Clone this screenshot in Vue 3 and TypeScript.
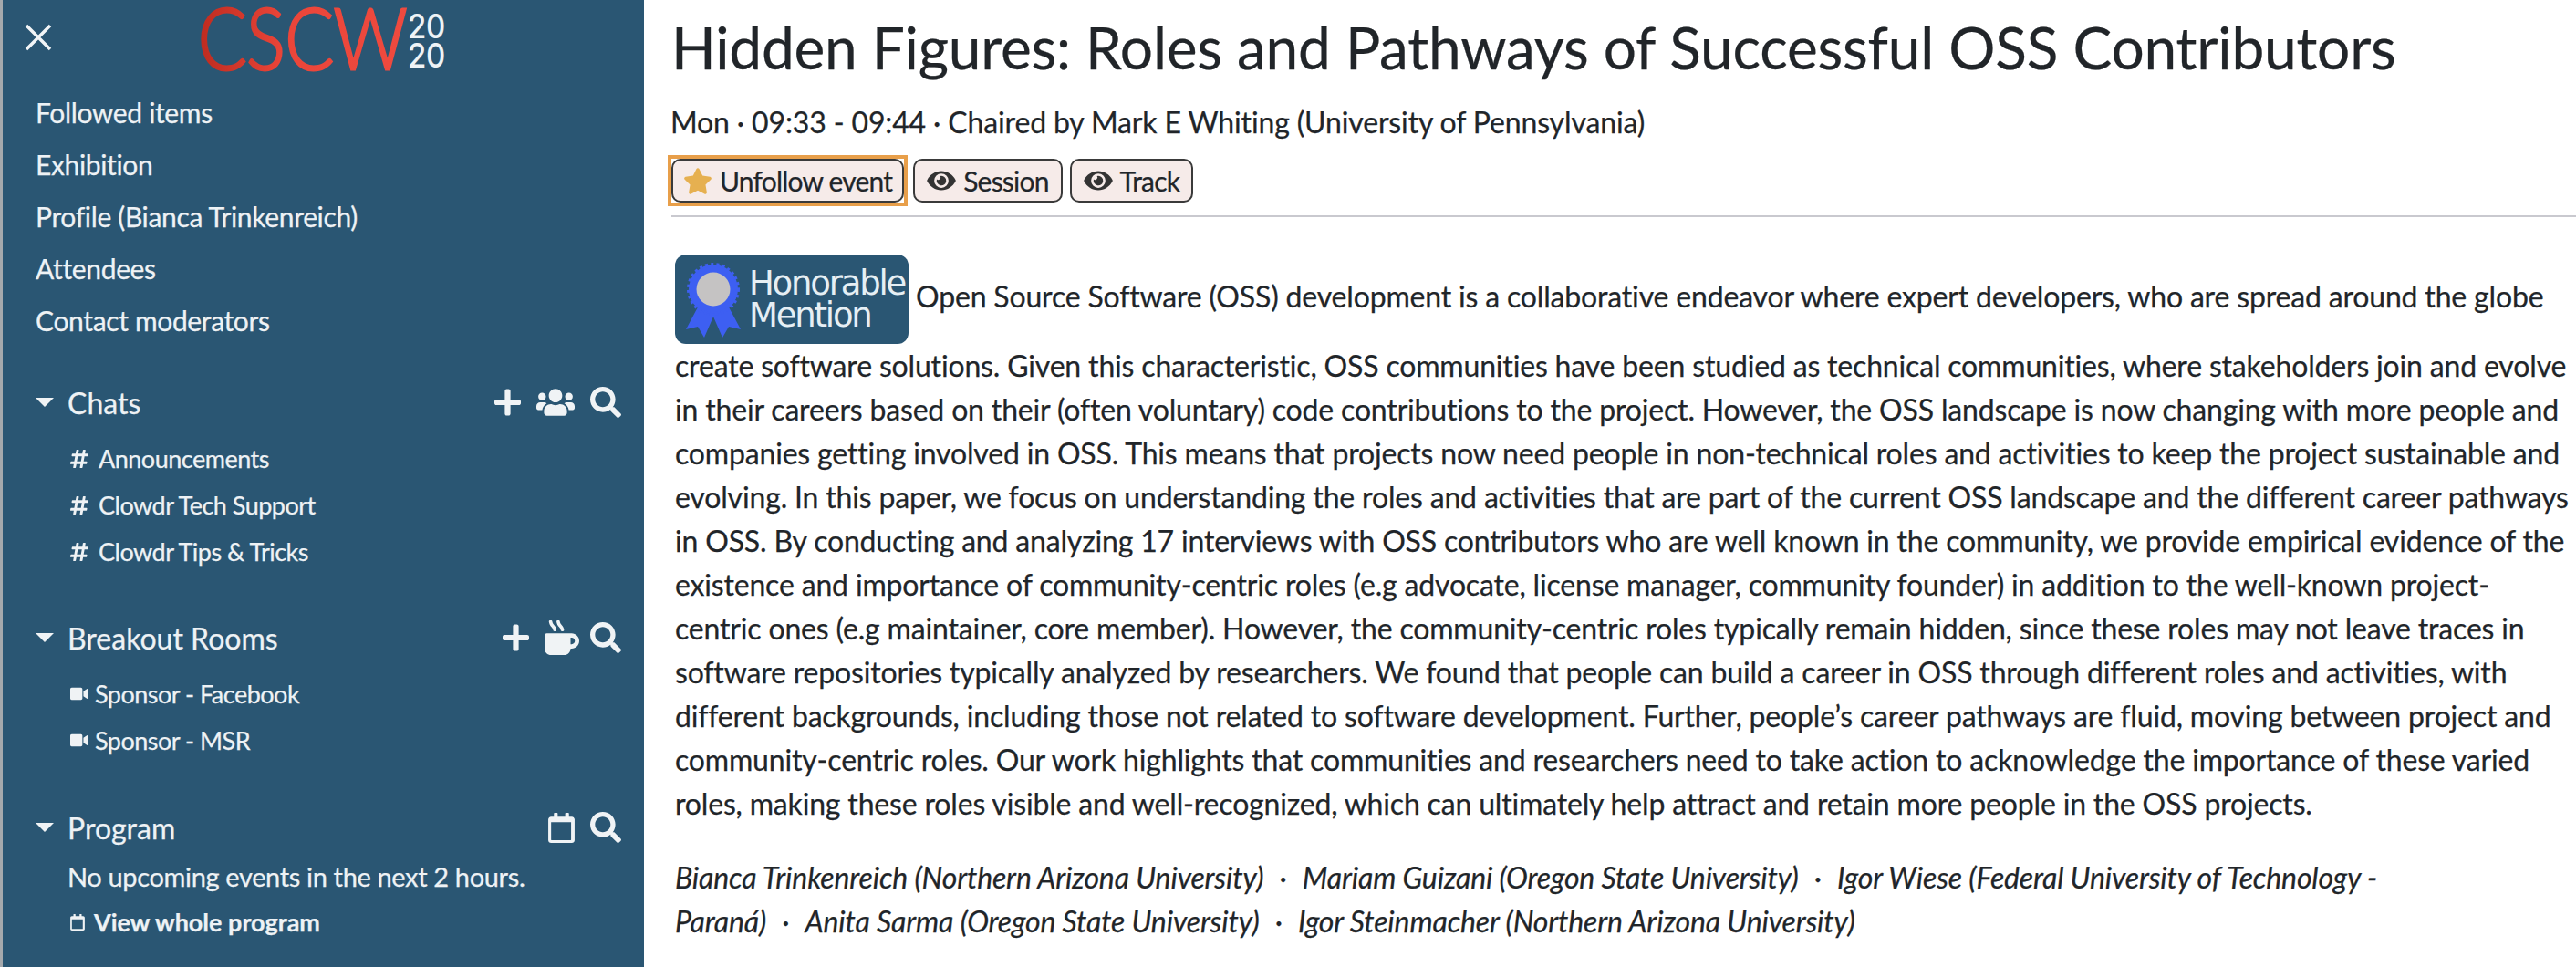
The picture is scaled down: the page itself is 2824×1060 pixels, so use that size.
<script setup lang="ts">
const icons: Record<string, { box: string; d: string }> = {
  plus: { box: '0 0 448 512', d: 'M416 208H272V64c0-17.67-14.33-32-32-32h-32c-17.67 0-32 14.33-32 32v144H32c-17.67 0-32 14.33-32 32v32c0 17.67 14.33 32 32 32h144v144c0 17.67 14.33 32 32 32h32c17.67 0 32-14.33 32-32V304h144c17.67 0 32-14.33 32-32v-32c0-17.67-14.33-32-32-32z' },
  users: { box: '0 0 640 512', d: 'M96 224c35.3 0 64-28.7 64-64s-28.7-64-64-64-64 28.7-64 64 28.7 64 64 64zm448 0c35.3 0 64-28.7 64-64s-28.7-64-64-64-64 28.7-64 64 28.7 64 64 64zm32 32h-64c-17.6 0-33.5 7.1-45.1 18.6 40.3 22.1 68.9 62 75.1 109.4h66c17.7 0 32-14.3 32-32v-32c0-35.3-28.7-64-64-64zm-256 0c61.9 0 112-50.1 112-112S381.9 32 320 32 208 82.1 208 144s50.1 112 112 112zm76.8 32h-8.3c-20.8 10-43.9 16-68.5 16s-47.6-6-68.5-16h-8.3C179.6 288 128 339.6 128 403.2V432c0 26.5 21.5 48 48 48h288c26.5 0 48-21.5 48-48v-28.8c0-63.6-51.6-115.2-115.2-115.2zm-223.7-13.4C161.5 263.1 145.6 256 128 256H64c-35.3 0-64 28.7-64 64v32c0 17.7 14.3 32 32 32h65.9c6.3-47.4 34.9-87.3 75.2-109.4z' },
  search: { box: '0 0 512 512', d: 'M505 442.7L405.3 343c-4.5-4.5-10.6-7-17-7H372c27.6-35.3 44-79.7 44-128C416 93.1 322.9 0 208 0S0 93.1 0 208s93.1 208 208 208c48.3 0 92.7-16.4 128-44v16.3c0 6.4 2.5 12.5 7 17l99.7 99.7c9.4 9.4 24.6 9.4 33.9 0l28.3-28.3c9.4-9.4 9.4-24.6.1-34zM208 336c-70.7 0-128-57.2-128-128 0-70.7 57.2-128 128-128 70.7 0 128 57.2 128 128 0 70.7-57.2 128-128 128z' },
  coffee: { box: '0 0 512 512', d: 'M127.1 146.5c1.3 7.7 8 13.5 16 13.5h16.5c9.8 0 17.6-8.5 16.3-18-3.8-28.2-16.4-54.2-36.6-74.7-14.4-14.7-23.6-33.3-26.4-53.5C111.8 5.9 105 0 96.8 0H80.4C70.6 0 63 8.5 64.1 18c3.9 31.9 18 61.3 40.6 84.4 12 12.2 19.7 27.5 22.4 44.1zm112 0c1.3 7.7 8 13.5 16 13.5h16.5c9.8 0 17.6-8.5 16.3-18-3.8-28.2-16.4-54.2-36.6-74.7-14.4-14.7-23.6-33.3-26.4-53.5C223.8 5.9 217 0 208.8 0h-16.4c-9.8 0-17.5 8.5-16.3 18 3.9 31.9 18 61.3 40.6 84.4 12 12.2 19.7 27.5 22.4 44.1zM400 192H32c-17.7 0-32 14.3-32 32v192c0 53 43 96 96 96h192c53 0 96-43 96-96h16c61.8 0 112-50.2 112-112s-50.2-112-112-112zm0 160h-16v-96h16c26.5 0 48 21.5 48 48s-21.5 48-48 48z' },
  calendar: { box: '0 0 448 512', d: 'M400 64h-48V12c0-6.6-5.4-12-12-12h-40c-6.6 0-12 5.4-12 12v52H160V12c0-6.6-5.4-12-12-12h-40c-6.6 0-12 5.4-12 12v52H48C21.5 64 0 85.5 0 112v352c0 26.5 21.5 48 48 48h352c26.5 0 48-21.5 48-48V112c0-26.5-21.5-48-48-48zm-6 400H54c-3.3 0-6-2.7-6-6V160h340v298c0 3.3-2.7 6-6 6z' },
  video: { box: '0 0 576 512', d: 'M336.2 64H47.8C21.4 64 0 85.4 0 111.8v288.4C0 426.6 21.4 448 47.8 448h288.4c26.4 0 47.8-21.4 47.8-47.8V111.8c0-26.4-21.4-47.8-47.8-47.8zm189.4 37.7L416 177.3v157.4l109.6 75.5c21.2 14.6 50.4-.3 50.4-25.8V127.5c0-25.4-29.1-40.4-50.4-25.8z' },
  hashtag: { box: '0 0 448 512', d: 'M440.667 182.109l7.143-40c1.313-7.355-4.342-14.109-11.813-14.109h-74.81l14.623-81.891C377.123 38.754 371.468 32 363.997 32h-40.632a12 12 0 0 0-11.813 9.891L296.175 128H197.54l14.623-81.891C213.477 38.754 207.822 32 200.35 32h-40.632a12 12 0 0 0-11.813 9.891L132.528 128H53.432a12 12 0 0 0-11.813 9.891l-7.143 40C33.163 185.246 38.818 192 46.289 192h74.81L98.242 320H19.146a12 12 0 0 0-11.813 9.891l-7.143 40C-1.123 377.246 4.532 384 12.003 384h74.81L72.19 465.891C70.877 473.246 76.532 480 84.003 480h40.632a12 12 0 0 0 11.813-9.891L152.825 384h98.634l-14.623 81.891C235.523 473.246 241.178 480 248.65 480h40.632a12 12 0 0 0 11.813-9.891L316.472 384h79.096a12 12 0 0 0 11.813-9.891l7.143-40c1.313-7.355-4.342-14.109-11.813-14.109h-74.81l22.857-128h79.096a12 12 0 0 0 11.813-9.891zM262.889 320h-98.634l22.857-128h98.634l-22.857 128z' },
  eye: { box: '0 0 576 512', d: 'M572.52 241.4C518.29 135.59 410.93 64 288 64S57.68 135.64 3.48 241.41a32.35 32.35 0 0 0 0 29.19C57.71 376.41 165.07 448 288 448s230.32-71.64 284.52-177.41a32.35 32.35 0 0 0 0-29.19zM288 400a144 144 0 1 1 144-144 143.93 143.93 0 0 1-144 144zm0-240a95.31 95.31 0 0 0-25.31 3.79 47.85 47.85 0 0 1-66.9 66.9A95.78 95.78 0 1 0 288 160z' },
  star: { box: '0 0 576 512', d: 'M259.3 17.8L194 150.2 47.9 171.5c-26.2 3.8-36.7 36.1-17.7 54.6l105.7 103-25 145.5c-4.5 26.3 23.2 46 46.4 33.7L288 439.6l130.7 68.7c23.2 12.2 50.9-7.4 46.4-33.7l-25-145.5 105.7-103c19-18.5 8.5-50.8-17.7-54.6L382 150.2 316.7 17.8c-11.7-23.6-45.6-23.9-57.4 0z' },
}

const navItems = ['Followed items', 'Exhibition', 'Profile (Bianca Trinkenreich)', 'Attendees', 'Contact moderators']
const chats = ['Announcements', 'Clowdr Tech Support', 'Clowdr Tips & Tricks']
const rooms = ['Sponsor - Facebook', 'Sponsor - MSR']
const authors = [
  'Bianca Trinkenreich (Northern Arizona University)',
  'Mariam Guizani (Oregon State University)',
  'Igor Wiese (Federal University of Technology - Paraná)',
  'Anita Sarma (Oregon State University)',
  'Igor Steinmacher (Northern Arizona University)',
]
</script>

<template>
  <div class="page">
    <aside class="sidebar">
      <div class="brand">
        <svg class="close" viewBox="0 0 30 30"><path d="M2 2L28 28M28 2L2 28" /></svg>
        <svg class="logo" viewBox="0 0 272 90">
          <defs>
            <linearGradient id="logoRed" gradientUnits="userSpaceOnUse" x1="0" x2="226" y1="0" y2="0">
              <stop offset="0" stop-color="#bf2c20" />
              <stop offset="0.4" stop-color="#ea4539" />
              <stop offset="1" stop-color="#ef4a3f" />
            </linearGradient>
          </defs>
          <text class="logo-main" x="-3" y="76" textLength="229" lengthAdjust="spacingAndGlyphs" fill="url(#logoRed)" stroke="url(#logoRed)">CSCW</text>
          <text class="logo-year" x="227" y="42" textLength="41" lengthAdjust="spacingAndGlyphs">20</text>
          <text class="logo-year" x="227" y="74" textLength="41" lengthAdjust="spacingAndGlyphs">20</text>
        </svg>
      </div>

      <nav class="nav">
        <a v-for="item in navItems" :key="item">{{ item }}</a>
      </nav>

      <section class="group chats">
        <header class="group-head">
          <span class="caret"></span>
          <span class="group-title">Chats</span>
          <span class="tools">
            <svg class="tool" :viewBox="icons.plus.box"><path :d="icons.plus.d" /></svg>
            <svg class="tool wide" :viewBox="icons.users.box"><path :d="icons.users.d" /></svg>
            <svg class="tool" :viewBox="icons.search.box"><path :d="icons.search.d" /></svg>
          </span>
        </header>
        <ul class="list">
          <li v-for="chat in chats" :key="chat">
            <svg class="hash" :viewBox="icons.hashtag.box"><path :d="icons.hashtag.d" /></svg>
            {{ chat }}
          </li>
        </ul>
      </section>

      <section class="group rooms">
        <header class="group-head">
          <span class="caret"></span>
          <span class="group-title">Breakout Rooms</span>
          <span class="tools">
            <svg class="tool" :viewBox="icons.plus.box"><path :d="icons.plus.d" /></svg>
            <svg class="tool cup" :viewBox="icons.coffee.box"><path :d="icons.coffee.d" /></svg>
            <svg class="tool" :viewBox="icons.search.box"><path :d="icons.search.d" /></svg>
          </span>
        </header>
        <ul class="list">
          <li v-for="room in rooms" :key="room">
            <svg class="cam" :viewBox="icons.video.box"><path :d="icons.video.d" /></svg>
            {{ room }}
          </li>
        </ul>
      </section>

      <section class="group program">
        <header class="group-head">
          <span class="caret"></span>
          <span class="group-title">Program</span>
          <span class="tools">
            <svg class="tool cal" :viewBox="icons.calendar.box"><path :d="icons.calendar.d" /></svg>
            <svg class="tool" :viewBox="icons.search.box"><path :d="icons.search.d" /></svg>
          </span>
        </header>
        <p class="empty">No upcoming events in the next 2 hours.</p>
        <p class="whole">
          <svg class="cal-small" :viewBox="icons.calendar.box"><path :d="icons.calendar.d" /></svg>
          <b>View whole program</b>
        </p>
      </section>
    </aside>

    <main class="content">
      <h1>Hidden Figures: Roles and Pathways of Successful OSS Contributors</h1>
      <p class="meta">Mon · 09:33 - 09:44 · Chaired by Mark E Whiting (University of Pennsylvania)</p>
      <div class="actions">
        <span class="focus-ring">
          <button class="btn first">
            <svg class="star" :viewBox="icons.star.box"><path :d="icons.star.d" /></svg>
            Unfollow event
          </button>
        </span>
        <button class="btn">
          <svg class="eye" :viewBox="icons.eye.box"><path :d="icons.eye.d" /></svg>
          Session
        </button>
        <button class="btn">
          <svg class="eye" :viewBox="icons.eye.box"><path :d="icons.eye.d" /></svg>
          Track
        </button>
      </div>
      <hr />

      <p class="abstract">
        <span class="badge">
          <svg class="ribbon" viewBox="0 0 62 83">
            <path d="M16 46L1 74L14 71L21 83L31 60L41 83L48 71L61 74L46 46Z" fill="#3d5ff2" />
            <circle cx="31" cy="30" r="27" fill="#3d5ff2" stroke="#3d5ff2" stroke-width="4" stroke-dasharray="3 3.2" />
            <circle cx="31" cy="30" r="18.5" fill="#c5c3c3" />
          </svg>
          <span class="badge-text">Honorable<br />Mention</span>
        </span>
        Open Source Software (OSS) development is a collaborative endeavor where expert developers, who are spread around the globe create software solutions. Given this characteristic, OSS communities have been studied as technical communities, where stakeholders join and evolve in their careers based on their (often voluntary) code contributions to the project. However, the OSS landscape is now changing with more people and companies getting involved in OSS. This means that projects now need people in non-technical roles and activities to keep the project sustainable and evolving. In this paper, we focus on understanding the roles and activities that are part of the current OSS landscape and the different career pathways in OSS. By conducting and analyzing 17 interviews with OSS contributors who are well known in the community, we provide empirical evidence of the existence and importance of community-centric roles (e.g advocate, license manager, community founder) in addition to the well-known project-centric ones (e.g maintainer, core member). However, the community-centric roles typically remain hidden, since these roles may not leave traces in software repositories typically analyzed by researchers. We found that people can build a career in OSS through different roles and activities, with different backgrounds, including those not related to software development. Further, people’s career pathways are fluid, moving between project and community-centric roles. Our work highlights that communities and researchers need to take action to acknowledge the importance of these varied roles, making these roles visible and well-recognized, which can ultimately help attract and retain more people in the OSS projects.
      </p>

      <p class="authors">
        <template v-for="(author, i) in authors" :key="author">
          <span v-if="i > 0" class="dot"> · </span>{{ author }}
        </template>
      </p>
    </main>
  </div>
</template>

<style scoped>
.page {
  display: flex;
  width: 2824px;
  height: 1060px;
  overflow: hidden;
  background: #fff;
  font-family: Lato, 'Open Sans', sans-serif;
  color: #212529;
}

.sidebar {
  width: 706px;
  height: 1060px;
  flex: none;
  box-sizing: border-box;
  padding: 0 25px 0 36px;
  background: #2a5673;
  border-left: 3px solid #a5a9ad;
  color: #eef2f5;
  font-size: 30px;
  letter-spacing: -0.35px;
  -webkit-text-stroke: 0.25px;
}

.brand {
  display: flex;
  height: 95px;
  position: relative;
}

.close {
  position: absolute;
  left: -12px;
  top: 26px;
  width: 30px;
  height: 30px;
  fill: none;
  stroke: #f2f5f7;
  stroke-width: 3.5;
}

.logo {
  margin-left: 181px;
  width: 272px;
  height: 90px;
  overflow: visible;
}

.logo-main {
  font-size: 92px;
  font-weight: 300;
  stroke-width: 3px;
}

.logo-year {
  font-family: Inter, sans-serif;
  font-size: 37px;
  font-weight: 500;
  fill: #eef3f6;
}

.nav {
  display: flex;
  flex-direction: column;
}

.nav a {
  height: 57px;
  line-height: 57px;
}

.group-head {
  display: flex;
  align-items: center;
  height: 50px;
  font-size: 32px;
  letter-spacing: 0;
}

.caret {
  width: 0;
  height: 0;
  margin-right: 15px;
  border-left: 10px solid transparent;
  border-right: 10px solid transparent;
  border-top: 10px solid #f0f3f5;
}

.tools {
  display: flex;
  align-items: center;
  gap: 17px;
  margin-left: auto;
}

.tool {
  width: 29px;
  height: 34px;
  fill: #f0f3f5;
}

.tool:last-child {
  width: 34px;
}

.tool.wide {
  width: 42px;
}

.tool.cup {
  width: 38px;
  height: 38px;
  margin-right: -5px;
}

.tool.cal {
  width: 29px;
  height: 33px;
}

.list {
  list-style: none;
  margin: 0;
  padding: 0 0 0 38px;
  font-size: 27px;
  letter-spacing: -0.5px;
}

.list li {
  display: flex;
  align-items: center;
  height: 51px;
}

.hash {
  width: 20px;
  height: 24px;
  margin-right: 11px;
  fill: #f0f3f5;
}

.cam {
  width: 20px;
  height: 19px;
  margin-right: 7px;
  fill: #f0f3f5;
}

.chats {
  margin-top: 36px;
}

.chats .list {
  margin-top: 11px;
}

.rooms {
  margin-top: 44px;
}

.rooms .list {
  margin-top: 11px;
}

.program {
  margin-top: 45px;
}

.empty {
  margin: 5px 0 0 35px;
  line-height: 48px;
  font-size: 29px;
}

.whole {
  display: flex;
  align-items: center;
  gap: 10px;
  margin: 2px 0 0 38px;
  line-height: 48px;
  font-size: 27px;
  letter-spacing: 0;
}

.cal-small {
  width: 16px;
  height: 18px;
  fill: #f0f3f5;
}

.content {
  flex: 1;
  min-width: 0;
  padding: 0 0 0 30px;
  letter-spacing: -0.17px;
  -webkit-text-stroke: 0.25px;
}

h1 {
  margin: 16px 0 0;
  font-size: 64px;
  font-weight: 400;
  line-height: 72px;
  letter-spacing: -0.22px;
  white-space: nowrap;
}

.meta {
  margin: 22px 0 0 -1px;
  font-size: 32px;
  line-height: 48px;
  letter-spacing: -0.14px;
}

.actions {
  display: flex;
  gap: 8px;
  margin-top: 16px;
}

.focus-ring {
  display: flex;
  margin-right: 2px;
  outline: 4px solid #e89f4a;
}

.btn {
  display: flex;
  align-items: center;
  gap: 8px;
  height: 48px;
  padding: 0 13px;
  border: 2px solid #3a3a3a;
  border-radius: 10px;
  background: #f6ebe9;
  color: #212529;
  font: 30px Lato, sans-serif;
  letter-spacing: -0.8px;
  -webkit-text-stroke: 0.25px;
}

.btn.first {
  padding: 0 11px;
}

.star {
  width: 32px;
  height: 29px;
  fill: #e6b050;
}

.eye {
  width: 32px;
  height: 28px;
  fill: #333;
}

hr {
  margin: 14px 0 0;
  border: 0;
  border-top: 2px solid #c9c9cf;
}

.abstract {
  margin: 41px 5px 0 4px;
  font-size: 32px;
  line-height: 48px;
}

.badge {
  display: inline-flex;
  align-items: center;
  width: 256px;
  height: 98px;
  box-sizing: border-box;
  padding-left: 11px;
  gap: 8px;
  vertical-align: -33px;
  border-radius: 12px;
  background: #2a5673;
  color: #e6eff4;
  -webkit-text-stroke: 0;
}

.ribbon {
  width: 62px;
  height: 83px;
  flex: none;
}

.badge-text {
  font: 37px/35px 'DejaVu Sans', sans-serif;
  letter-spacing: -2.2px;
}

.authors {
  width: 1900px;
  margin: 33px 0 0 4px;
  font-size: 32px;
  font-style: italic;
  line-height: 48px;
  letter-spacing: -0.14px;
}

.dot {
  margin: 0 9px;
  font-style: normal;
}
</style>
